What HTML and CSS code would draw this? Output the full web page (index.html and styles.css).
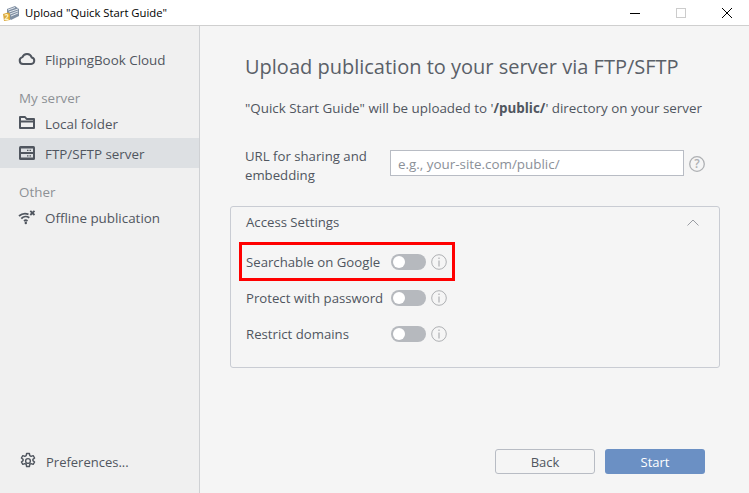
FILE: index.html
```html
<!DOCTYPE html>
<html lang="en">
<head>
<meta charset="utf-8">
<title>Upload</title>
<link rel="stylesheet" href="styles.css">
</head>
<body>
<div class="window">
  <header class="titlebar">
    <svg class="app-icon" width="16" height="16" viewBox="0 0 16 16"><path d="M4 4l8-3 4 3v7l-8 4-4-3z" fill="#7f8fa3"/><path d="M5 5l7-2.500M6 7l9-3M7 9l8-3M8 11l7-3" stroke="#e3e8ee"/><path d="M0 9l5-1.500 2 1V15l-6 1z" fill="#dca93a"/><text x="3.500" y="14.500" text-anchor="middle" class="app-num">2</text></svg>
    <span class="title">Upload "Quick Start Guide"</span>
    <div class="winctl">
      <svg width="12" height="12" viewBox="0 0 12 12"><path d="M1 6.500h10" stroke="#000"/></svg>
      <svg width="12" height="12" viewBox="0 0 12 12"><rect x="1.500" y="1.500" width="9" height="9" fill="none" stroke="#ccc"/></svg>
      <svg width="12" height="12" viewBox="0 0 12 12"><path d="M1 1l10 10M11 1L1 11" stroke="#000"/></svg>
    </div>
  </header>
  <div class="body">
    <aside class="sidebar">
      <div class="nav">
        <a class="item">
          <svg class="ico" width="18" height="18" viewBox="0 0 18 18"><path d="M5 14h8.200a3.300 3.300 0 0 0 .5-6.500 4.900 4.900 0 0 0-9.300-.4A3.500 3.500 0 0 0 5 14z" fill="none" stroke="#50565f" stroke-width="2"/></svg>
          <span>FlippingBook Cloud</span>
        </a>
        <div class="group">My server</div>
        <a class="item local">
          <svg class="ico" width="18" height="18" viewBox="0 0 18 18"><path d="M2 14V3h5l1.600 2H16v9z" fill="none" stroke="#50565f" stroke-width="2" stroke-linejoin="round"/><path d="M2 7.500h14" stroke="#50565f" stroke-width="2"/></svg>
          <span>Local folder</span>
        </a>
        <a class="item active">
          <svg class="ico" width="18" height="18" viewBox="0 0 18 18"><rect x="1" y="2" width="16" height="14" rx="1.500" fill="#50565f"/><path d="M3 4.500h12v3.500H3zM3 10h12v3.500H3z" fill="#dde0e3"/><path d="M9 6.300h1.500M11.500 6.300H13M9 11.800h1.500M11.500 11.800H13" stroke="#50565f" stroke-width="1.300"/></svg>
          <span>FTP/SFTP server</span>
        </a>
        <div class="group other">Other</div>
        <a class="item offline">
          <svg class="ico" width="18" height="18" viewBox="0 0 18 18"><path d="M1 8a9.500 9.500 0 0 1 9.500-1.700M3.300 10.600a6 6 0 0 1 8-.8M6 13a2.800 2.800 0 0 1 3.500 0" fill="none" stroke="#50565f" stroke-width="1.800"/><circle cx="7.800" cy="15" r="1.200" fill="#50565f"/><path d="M12.300 2.800l4.200 4.200M16.500 2.800l-4.200 4.200" stroke="#50565f" stroke-width="1.800"/></svg>
          <span>Offline publication</span>
        </a>
      </div>
      <a class="prefs">
        <svg class="ico" width="18" height="18" viewBox="0 0 18 18"><path d="M7.600 1.500h2.800l.4 2.200 1.300.7 2.100-.8 1.400 2.400-1.700 1.400v1.200l1.700 1.400-1.400 2.400-2.100-.8-1.300.7-.4 2.200H7.600l-.4-2.200-1.300-.7-2.100.8-1.400-2.400 1.700-1.400V7.400L2.400 6l1.400-2.400 2.100.8 1.300-.7z" fill="none" stroke="#50565f" stroke-width="1.400" stroke-linejoin="round"/><circle cx="9" cy="9" r="2.400" fill="none" stroke="#50565f" stroke-width="1.400"/></svg>
        <span>Preferences...</span>
      </a>
    </aside>
    <main class="content">
      <h1>Upload publication to your server via FTP/SFTP</h1>
      <p class="note">"Quick Start Guide" will be uploaded to '<b>/public/</b>' directory on your server</p>
      <div class="url-row">
        <label class="url-label">URL for sharing and embedding</label>
        <div class="input">e.g., your-site.com/public/</div>
        <svg class="help" width="16" height="16" viewBox="0 0 16 16"><circle cx="8" cy="8" r="7.300" fill="none" stroke="#aeb0b3" stroke-width="1.300"/><text x="8" y="12.300" text-anchor="middle" class="help-q">?</text></svg>
      </div>
      <section class="panel">
        <div class="panel-head">
          <span>Access Settings</span>
          <svg width="12" height="7" viewBox="0 0 12 7"><path d="M.5 6.500L6 1l5.500 5.500" fill="none" stroke="#9a9da3"/></svg>
        </div>
        <div class="setting highlighted">
          <span class="setting-label">Searchable on Google</span>
          <span class="toggle"></span>
          <svg class="info" width="16" height="16" viewBox="0 0 16 16"><circle cx="8" cy="8" r="7.300" fill="none" stroke="#aeb0b3"/><path d="M8 6.500v6M8 3.500v1.500" stroke="#aeb0b3" stroke-width="1.200"/></svg>
        </div>
        <div class="setting">
          <span class="setting-label">Protect with password</span>
          <span class="toggle"></span>
          <svg class="info" width="16" height="16" viewBox="0 0 16 16"><circle cx="8" cy="8" r="7.300" fill="none" stroke="#aeb0b3"/><path d="M8 6.500v6M8 3.500v1.500" stroke="#aeb0b3" stroke-width="1.200"/></svg>
        </div>
        <div class="setting">
          <span class="setting-label">Restrict domains</span>
          <span class="toggle"></span>
          <svg class="info" width="16" height="16" viewBox="0 0 16 16"><circle cx="8" cy="8" r="7.300" fill="none" stroke="#aeb0b3"/><path d="M8 6.500v6M8 3.500v1.500" stroke="#aeb0b3" stroke-width="1.200"/></svg>
        </div>
      </section>
      <div class="actions">
        <button class="btn back">Back</button>
        <button class="btn start">Start</button>
      </div>
    </main>
  </div>
</div>
</body>
</html>
```

FILE: styles.css
```css
* { box-sizing: border-box; }
html, body { margin: 0; padding: 0; }
body { font-family: "Open Sans", "Noto Sans", sans-serif; font-size: 13.4px; color: #50565f; }
.window { width: 749px; height: 493px; display: flex; flex-direction: column; background: #f5f5f5; overflow: hidden; }
.titlebar { height: 26px; flex: none; display: flex; align-items: center; background: #fff; border-bottom: 1px solid #cfcfcf; padding-left: 3px; }
.app-icon { margin-right: 6px; }
.app-num { font-size: 8px; font-weight: 700; fill: #fff3c4; }
.title { font-size: 11.3px; color: #000; }
.winctl { margin-left: auto; display: flex; gap: 34px; padding-right: 16px; align-items: center; }
.body { flex: 1; display: flex; min-height: 0; }
.sidebar { width: 200px; flex: none; background: #f0f0f0; border-right: 1px solid #cfd1d4; display: flex; flex-direction: column; }
.nav { padding-top: 18px; display: flex; flex-direction: column; }
.item { height: 30px; display: flex; align-items: center; padding-left: 18px; gap: 9px; }
.item span, .prefs span { padding-top: 2px; }
.item.active { background: #dde0e3; }
.item.local { margin-top: 2px; }
.item.offline { margin-top: 2px; }
.ico { flex: none; }
.group { color: #8d9095; padding: 16px 0 0 19px; line-height: 16px; }
.prefs { margin-top: auto; margin-bottom: 22px; display: flex; align-items: center; gap: 9px; padding-left: 19px; font-size: 13px; }
.content { flex: 1; padding: 27px 29px 0 30px; display: flex; flex-direction: column; min-width: 0; }
h1 { margin: 0 0 0 15px; font-weight: 400; font-size: 20px; line-height: 27px; color: #5a6068; }
.note { margin: 19px 0 0 15px; line-height: 18px; color: #50565f; }
.note b { font-weight: 700; }
.url-row { display: flex; align-items: flex-start; margin: 29px 0 0 15px; }
.url-label { width: 145px; padding-top: 1px; line-height: 19px; flex: none; font-size: 13.2px; }
.input { width: 294px; height: 26px; margin-top: 4px; background: #fff; border: 1px solid #b8bcc4; color: #8b9098; padding-left: 7px; line-height: 26px; }
.help { margin: 10px 0 0 5px; }
.help-q { font-size: 12px; fill: #aeb0b3; font-weight: 600; }
.panel { margin-top: 21px; height: 162px; border: 1px solid #c9ccd3; border-radius: 3px; padding: 0 20px 0 15px; font-size: 13.2px; }
.panel-head { display: flex; justify-content: space-between; align-items: center; height: 30px; }
.setting { display: flex; align-items: center; height: 36px; }
.setting-label { width: 145px; flex: none; }
.highlighted { outline: 3px solid #f00; outline-offset: -2px; margin: 6px 245px 0 -6px; padding: 1px 0 0 6px; height: 37px; }
.toggle { width: 35px; height: 16px; border-radius: 8px; background: #b6b9be; position: relative; flex: none; }
.toggle::after { content: ""; position: absolute; left: 2px; top: 2px; width: 12px; height: 12px; border-radius: 50%; background: #fff; }
.info { margin-left: 5px; flex: none; }
.actions { margin-top: 81px; display: flex; justify-content: flex-end; gap: 10px; padding-right: 15px; }
.btn { width: 100px; height: 25px; border-radius: 3px; font: inherit; font-size: 13px; padding: 0; }
.back { background: #f5f5f5; border: 1px solid #b8bcc4; color: #50565f; }
.start { background: #6b90c4; border: 0; color: #fff; }
```
